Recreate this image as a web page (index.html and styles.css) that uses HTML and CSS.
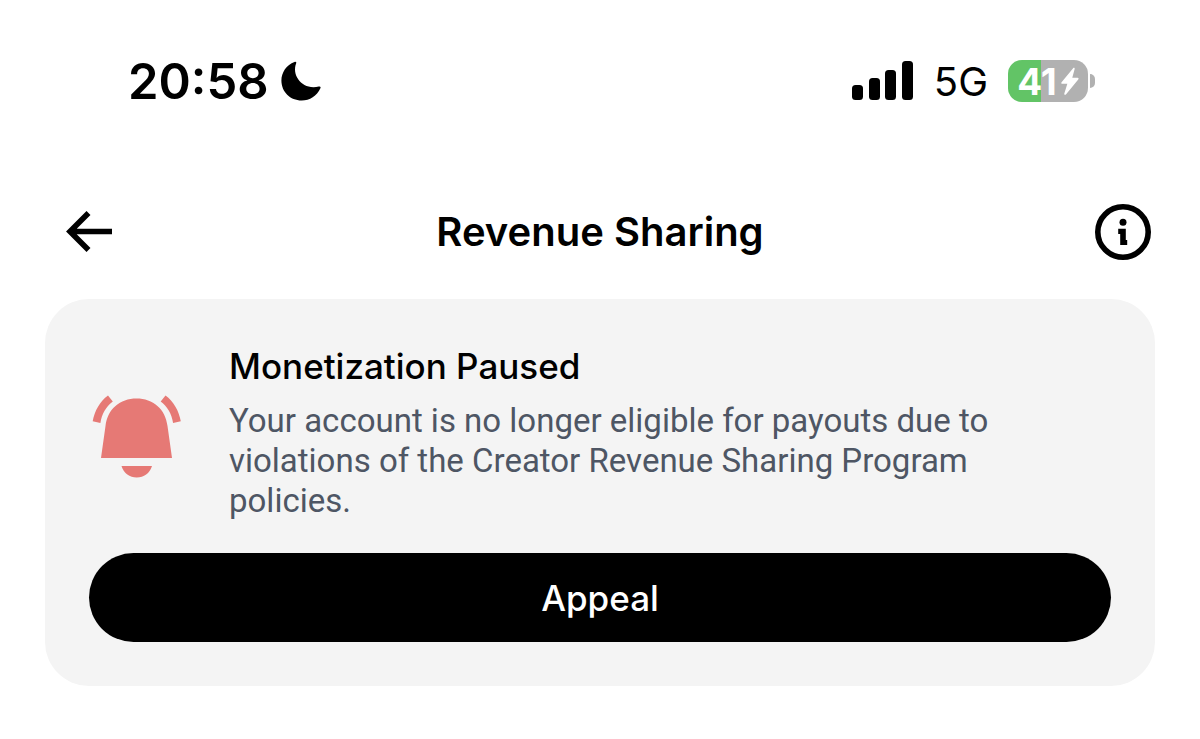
FILE: index.html
```html
<!DOCTYPE html>
<html lang="en">
<head>
  <meta charset="UTF-8" />
  <meta name="viewport" content="width=device-width, initial-scale=1.0"/>
  <title>Revenue Sharing</title>
  <link rel="stylesheet" href="styles.css">
</head>
<body>
  <!-- Status bar -->
  <div class="status-bar">
    <div class="status-left">
      <span class="clock">20:58</span>
      <svg class="moon" width="40" height="40" viewBox="0 0 40 40" aria-hidden="true">
        <path d="M13.5 1C14.8 .3 15.8 1.2 15.1 2.6C10.4 14.6 21.5 29.6 37.8 25.6C39.3 25.2 40 26 39.4 27.3C35.8 35.2 28.8 39.6 20.7 39.6C9.2 39.6 .4 30.9 .4 19.6C.4 11.4 5.4 4 13.5 1Z"/>
      </svg>
    </div>
    <div class="status-right">
      <svg class="signal" width="62" height="40" viewBox="0 0 62 40" aria-hidden="true">
        <rect x="0" y="24" width="11" height="15" rx="3.5"/>
        <rect x="17" y="17" width="11" height="22" rx="3.5"/>
        <rect x="33" y="9" width="11" height="30" rx="3.5"/>
        <rect x="50" y="0" width="11" height="39" rx="3.5"/>
      </svg>
      <span class="network">5G</span>
      <div class="battery">
        <div class="battery-body">
          <span>41</span>
          <svg width="18" height="29" viewBox="0 0 19 30" aria-hidden="true">
            <path d="M12.8 1C13.4 0 14.7.5 14.4 1.7L11.9 11H17.5C18.6 11 18.9 12 18.2 12.8L5.2 28.6C4.4 29.6 3.1 28.9 3.5 27.7L6.7 17.5H1.3C.3 17.5 0 16.6.6 15.8Z"/>
          </svg>
        </div>
        <div class="battery-tip"></div>
      </div>
    </div>
  </div>

  <!-- Header -->
  <header class="page-header">
    <button type="button" class="icon-button back-button" aria-label="Back">
      <svg width="48" height="56" viewBox="0 0 48 56" aria-hidden="true">
        <path d="M23.500 9L5 27.500L23.500 46M5 27.500H47" fill="none" stroke="#000" stroke-width="5.600"/>
      </svg>
    </button>
    <h1>Revenue Sharing</h1>
    <button type="button" class="icon-button info-button" aria-label="Info">
      <svg width="56" height="56" viewBox="0 0 56 56" aria-hidden="true">
        <circle cx="28" cy="28" r="25.200" fill="none" stroke="#000" stroke-width="5.600"/>
        <circle cx="28" cy="18.200" r="3.500"/>
        <path d="M23.200 24.800H30.800V36H32.200V41H25.200V30H23.200Z"/>
      </svg>
    </button>
  </header>

  <!-- Monetization notice -->
  <main class="card">
    <div class="notice">
      <svg class="bell" width="90" height="84" viewBox="0 0 90 84" aria-hidden="true">
        <path d="M9 64L13.500 32C15.500 15 28 4.500 44.500 4.500C61 4.500 73.500 15 75.500 32L80 64Z"/>
        <path d="M29.500 72H60C57.500 79.500 52 83.500 44.700 83.500C37.500 83.500 32 79.500 29.500 72Z"/>
        <path d="M16 1.500L20.800 7.500C14 12.500 9.800 20 8.400 29L.7 27.200C2.500 17 8 7.200 16 1.500Z"/>
        <path d="M73.500 1.500L68.700 7.500C75.500 12.500 79.700 20 81.100 29L88.800 27.200C87 17 81.500 7.200 73.500 1.500Z"/>
      </svg>
      <div class="notice-text">
        <h2>Monetization Paused</h2>
        <p>Your account is no longer eligible for payouts due to violations of the Creator Revenue Sharing Program policies.</p>
      </div>
    </div>
    <button type="button" class="appeal-button">Appeal</button>
  </main>
</body>
</html>
```

FILE: styles.css
```css
body {
  font-family: Inter, "Liberation Sans", sans-serif;
  background-color: #fff;
  color: #000;
  margin: 0;
  padding: 51px 45px;
}

svg {
  display: block;
}

/* Status bar */
.status-bar {
  display: flex;
  justify-content: space-between;
  align-items: center;
  height: 60px;
  padding: 0 60px 0 83px;
}

.status-left,
.status-right {
  display: flex;
  align-items: center;
}

.status-left {
  gap: 12px;
}

.status-right {
  gap: 20px;
}

.clock {
  font-size: 49px;
  font-weight: 600;
}

.network {
  font-size: 40px;
}

.battery {
  display: flex;
  align-items: center;
  gap: 2px;
}

.battery-body {
  display: flex;
  align-items: center;
  justify-content: center;
  gap: 4px;
  width: 80px;
  height: 42px;
  border-radius: 14px;
  background: linear-gradient(to right, #62c466 41%, #b1b1b1 41%);
  color: #fff;
  font-size: 37px;
  font-weight: 700;
}

.battery-body svg {
  fill: #fff;
}

.battery-tip {
  width: 5px;
  height: 14px;
  border-radius: 0 6px 6px 0;
  background-color: #b1b1b1;
}

/* Header */
.page-header {
  display: grid;
  grid-template-columns: 1fr auto 1fr;
  align-items: center;
  padding: 0 4px;
  margin: 93px 0 39px;
}

.page-header h1 {
  margin: 0;
  font-size: 40px;
  line-height: 48px;
  font-weight: 600;
}

.icon-button {
  padding: 0;
  border: none;
  background: none;
  color: #000;
  cursor: pointer;
}

.back-button {
  justify-self: start;
  padding-left: 16px;
}

.info-button {
  justify-self: end;
}

/* Card */
.card {
  padding: 43px 44px 44px;
  border-radius: 44px;
  background-color: #f4f4f4;
}

.notice {
  display: flex;
  align-items: center;
  gap: 47px;
  padding: 0 44px 0 3px;
  margin-bottom: 32px;
}

.bell {
  flex-shrink: 0;
  padding-top: 8px;
  fill: #e67975;
}

.notice-text h2 {
  margin: 0 0 11px;
  font-size: 35px;
  line-height: 48px;
  font-weight: 500;
}

.notice-text p {
  margin: 0;
  color: #4e5664;
  font-family: Roboto, "Liberation Sans", sans-serif;
  font-size: 33px;
  line-height: 40px;
}

.appeal-button {
  display: block;
  width: 100%;
  height: 89px;
  border: none;
  border-radius: 45px;
  background-color: #000;
  color: #fff;
  font-family: inherit;
  font-size: 35px;
  font-weight: 500;
  cursor: pointer;
}
```
